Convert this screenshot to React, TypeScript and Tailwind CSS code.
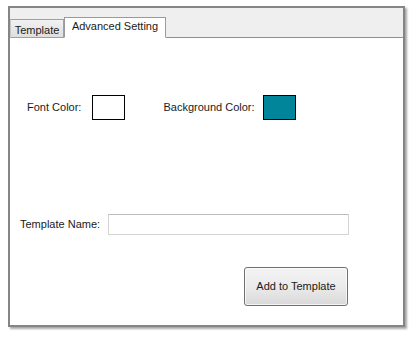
import React, { useState } from 'react';

// ── 템플릿 설정 패널 (Advanced Setting 탭) ─────────────────────────────
const font = { fontFamily: '"Liberation Sans", Arial, sans-serif' };

const App: React.FC = () => {
  const [tab, setTab] = useState<'template' | 'advanced'>('advanced');
  const [name, setName] = useState('');

  return (
    <div className="w-[420px] h-[348px] bg-white pt-[6px] pl-[8px]" style={font}>
      <div className="w-[397px] h-[321px] border-2 border-[#858585] shadow-[2px_2px_2px_rgba(0,0,0,0.35)] bg-white flex flex-col">

        {/* 탭 헤더 */}
        <div className="h-[30px] bg-[#efefef] border-b border-[#8f8f8f] flex items-end">
          <button
            onClick={() => setTab('template')}
            className="w-[54px] h-[19px] mb-[-1px] border border-[#a0a0a0] border-l-[#c8c8c8] bg-gradient-to-b from-[#f2f2f2] to-[#dedede] text-[11px] text-[#1a1a1a] leading-none pt-[3px]"
          >
            Template
          </button>
          <button
            onClick={() => setTab('advanced')}
            className="w-[102px] h-[21px] mb-[-1px] border border-[#9a9a9a] border-b-white bg-white text-[11px] text-[#1a1a1a] leading-none pb-[2px]"
          >
            Advanced Setting
          </button>
        </div>

        {/* 본문 */}
        <div className="flex-1 text-[11px] text-[#1a1a1a]">
          {/* 색상 */}
          <div className="flex items-center mt-[57px] pl-[17px]">
            <span>Font Color:</span>
            <div className="ml-[11px] w-[33px] h-[25px] border border-black bg-white" />
            <span className="ml-[38px]">Background Color:</span>
            <div className="ml-[8px] w-[33px] h-[25px] border border-black bg-[#01859a]" />
          </div>

          {/* 템플릿 이름 */}
          <div className="flex items-center mt-[94px] pl-[10px]">
            <span className="w-[88px]">Template Name:</span>
            <input
              type="text"
              value={name}
              onChange={(e) => setName(e.target.value)}
              className="w-[241px] h-[21px] border border-[#d4d4d4] border-t-[#bdbdbd] outline-none px-1 text-[11px]"
            />
          </div>

          {/* 버튼 */}
          <div className="flex mt-[32px] pl-[234px]">
            <button className="w-[104px] h-[39px] rounded-[3px] border border-[#707070] bg-gradient-to-b from-[#f3f3f3] via-[#ebebeb] to-[#d9d9d9] text-[11px] text-[#1a1a1a] shadow-[inset_0_0_0_1px_rgba(255,255,255,0.7)]">
              Add to Template
            </button>
          </div>
        </div>
      </div>
    </div>
  );
};

export default App;
